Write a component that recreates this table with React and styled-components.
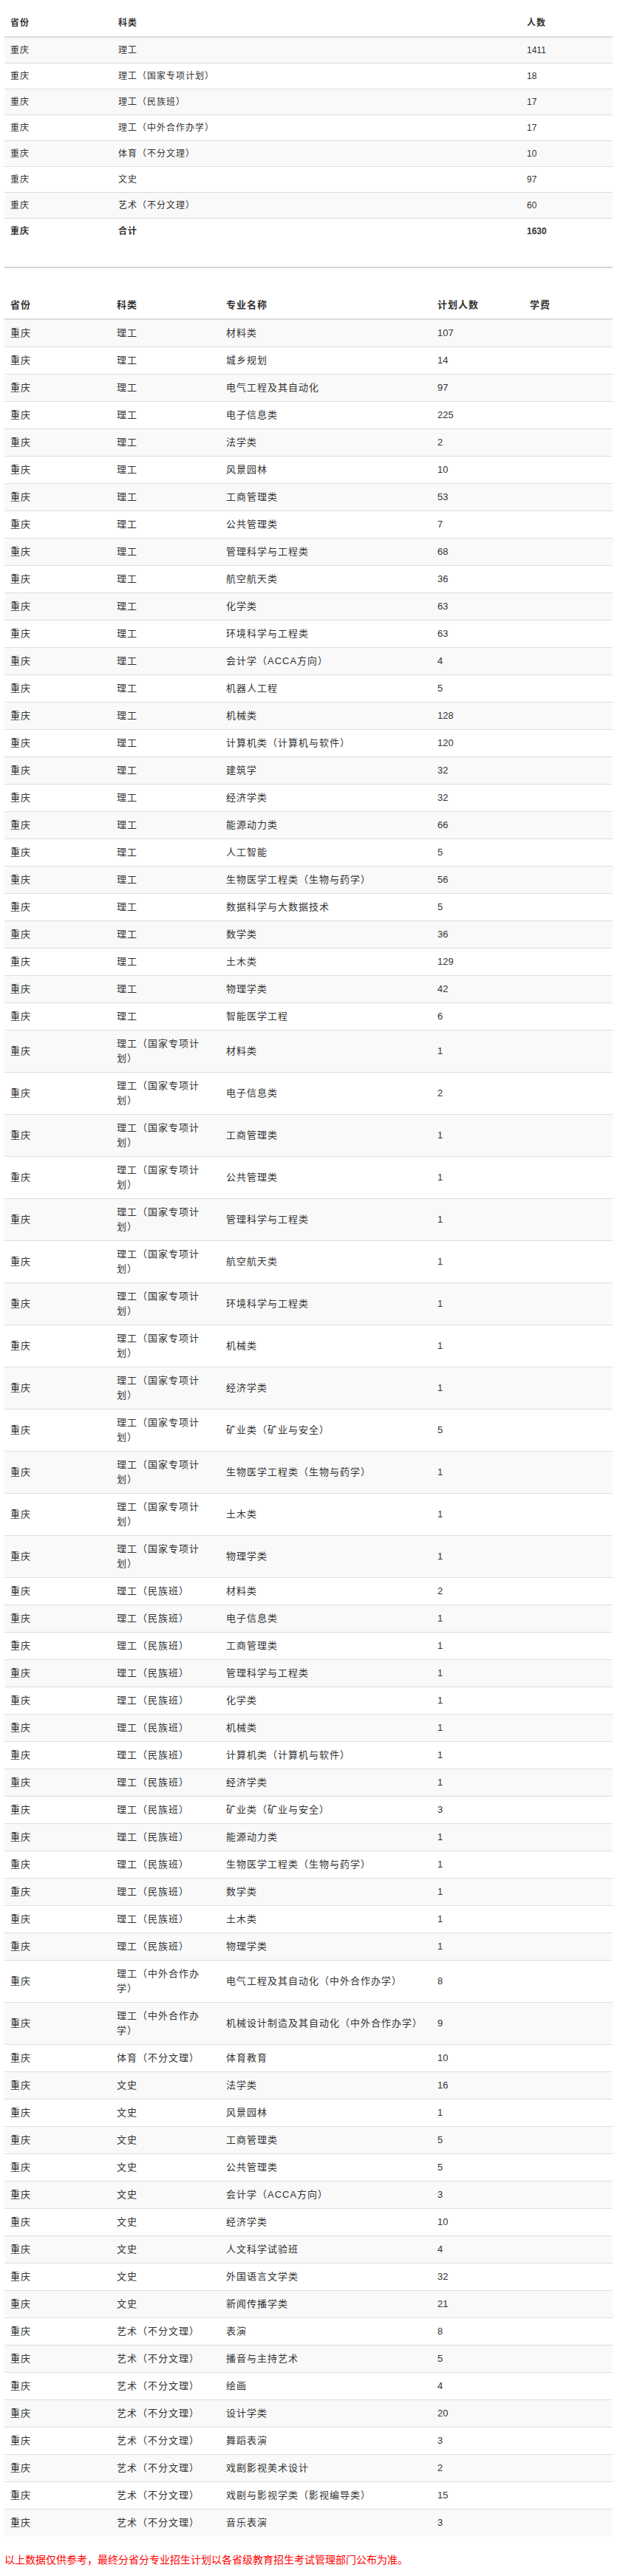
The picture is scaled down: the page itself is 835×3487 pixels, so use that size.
import React from 'react';
import styled, { createGlobalStyle } from 'styled-components';

const GlobalStyle = createGlobalStyle`
	body {
		margin: 0;
		background: #fff;
		color: #333;
		font-family: "Liberation Sans", "Noto Sans CJK SC", sans-serif;
	}
`;

const Page = styled.div`
	padding: 13px 6px 12px;
`;

const Table = styled.table`
	width: 823px;
	table-layout: fixed;
	border-collapse: collapse;
	border-spacing: 0;
	font-size: ${props => props.size}px;
	letter-spacing: 1px;
`;

const Th = styled.th`
	text-align: left;
	font-weight: bold;
	padding: 8px;
	line-height: 20px;
	border-bottom: 2px solid #ddd;
`;

const Row = styled.tr`
	&:nth-child(odd) {
		background: #f9f9f9;
	}
	&:not(:last-child) td {
		border-bottom: 1px solid #ddd;
	}
	font-weight: ${props => (props.total ? 'bold' : 'normal')};
`;

const Td = styled.td`
	padding: 8px;
	line-height: ${props => props.lh}px;
	letter-spacing: ${props => (props.num ? '0' : '1px')};
	vertical-align: middle;
`;

const Divider = styled.hr`
	margin: 31px 0 32px;
	border: 0;
	border-top: 2px solid #d5d5d5;
	height: 0;
`;

const Note = styled.p`
	margin: 22px 0 0;
	font-size: 14px;
	line-height: 20px;
	color: #f00;
`;

const summary = [
	['理工', '1411'],
	['理工（国家专项计划）', '18'],
	['理工（民族班）', '17'],
	['理工（中外合作办学）', '17'],
	['体育（不分文理）', '10'],
	['文史', '97'],
	['艺术（不分文理）', '60'],
];

const groups = [
	['理工', [
		['材料类', 107], ['城乡规划', 14], ['电气工程及其自动化', 97], ['电子信息类', 225],
		['法学类', 2], ['风景园林', 10], ['工商管理类', 53], ['公共管理类', 7],
		['管理科学与工程类', 68], ['航空航天类', 36], ['化学类', 63], ['环境科学与工程类', 63],
		['会计学（ACCA方向）', 4], ['机器人工程', 5], ['机械类', 128], ['计算机类（计算机与软件）', 120],
		['建筑学', 32], ['经济学类', 32], ['能源动力类', 66], ['人工智能', 5],
		['生物医学工程类（生物与药学）', 56], ['数据科学与大数据技术', 5], ['数学类', 36],
		['土木类', 129], ['物理学类', 42], ['智能医学工程', 6],
	]],
	['理工（国家专项计划）', [
		['材料类', 1], ['电子信息类', 2], ['工商管理类', 1], ['公共管理类', 1],
		['管理科学与工程类', 1], ['航空航天类', 1], ['环境科学与工程类', 1], ['机械类', 1],
		['经济学类', 1], ['矿业类（矿业与安全）', 5], ['生物医学工程类（生物与药学）', 1],
		['土木类', 1], ['物理学类', 1],
	]],
	['理工（民族班）', [
		['材料类', 2], ['电子信息类', 1], ['工商管理类', 1], ['管理科学与工程类', 1],
		['化学类', 1], ['机械类', 1], ['计算机类（计算机与软件）', 1], ['经济学类', 1],
		['矿业类（矿业与安全）', 3], ['能源动力类', 1], ['生物医学工程类（生物与药学）', 1],
		['数学类', 1], ['土木类', 1], ['物理学类', 1],
	]],
	['理工（中外合作办学）', [
		['电气工程及其自动化（中外合作办学）', 8], ['机械设计制造及其自动化（中外合作办学）', 9],
	]],
	['体育（不分文理）', [['体育教育', 10]]],
	['文史', [
		['法学类', 16], ['风景园林', 1], ['工商管理类', 5], ['公共管理类', 5],
		['会计学（ACCA方向）', 3], ['经济学类', 10], ['人文科学试验班', 4],
		['外国语言文学类', 32], ['新闻传播学类', 21],
	]],
	['艺术（不分文理）', [
		['表演', 8], ['播音与主持艺术', 5], ['绘画', 4], ['设计学类', 20], ['舞蹈表演', 3],
		['戏剧影视美术设计', 2], ['戏剧与影视学类（影视编导类）', 15], ['音乐表演', 3],
	]],
];

const plan = groups.flatMap(([kind, list]) => list.map(([major, n]) => ({ kind, major, n })));

export default function App() {
	return (
		<Page>
			<GlobalStyle />
			<Table size={12}>
				<colgroup>
					<col style={{ width: 146 }} />
					<col style={{ width: 553 }} />
					<col style={{ width: 124 }} />
				</colgroup>
				<thead>
					<tr>
						<Th>省份</Th>
						<Th>科类</Th>
						<Th>人数</Th>
					</tr>
				</thead>
				<tbody>
					{summary.map(([kind, n]) => (
						<Row key={kind}>
							<Td lh={18}>重庆</Td>
							<Td lh={18}>{kind}</Td>
							<Td lh={18} num>{n}</Td>
						</Row>
					))}
					<Row total>
						<Td lh={18}>重庆</Td>
						<Td lh={18}>合计</Td>
						<Td lh={18} num>1630</Td>
					</Row>
				</tbody>
			</Table>

			<Divider />

			<Table size={13}>
				<colgroup>
					<col style={{ width: 144 }} />
					<col style={{ width: 148 }} />
					<col style={{ width: 286 }} />
					<col style={{ width: 125 }} />
					<col style={{ width: 120 }} />
				</colgroup>
				<thead>
					<tr>
						<Th>省份</Th>
						<Th>科类</Th>
						<Th>专业名称</Th>
						<Th>计划人数</Th>
						<Th>学费</Th>
					</tr>
				</thead>
				<tbody>
					{plan.map((r, i) => (
						<Row key={i}>
							<Td lh={20}>重庆</Td>
							<Td lh={20}>{r.kind}</Td>
							<Td lh={20}>{r.major}</Td>
							<Td lh={20} num>{r.n}</Td>
							<Td lh={20}></Td>
						</Row>
					))}
				</tbody>
			</Table>

			<Note>以上数据仅供参考，最终分省分专业招生计划以各省级教育招生考试管理部门公布为准。</Note>
		</Page>
	);
}
